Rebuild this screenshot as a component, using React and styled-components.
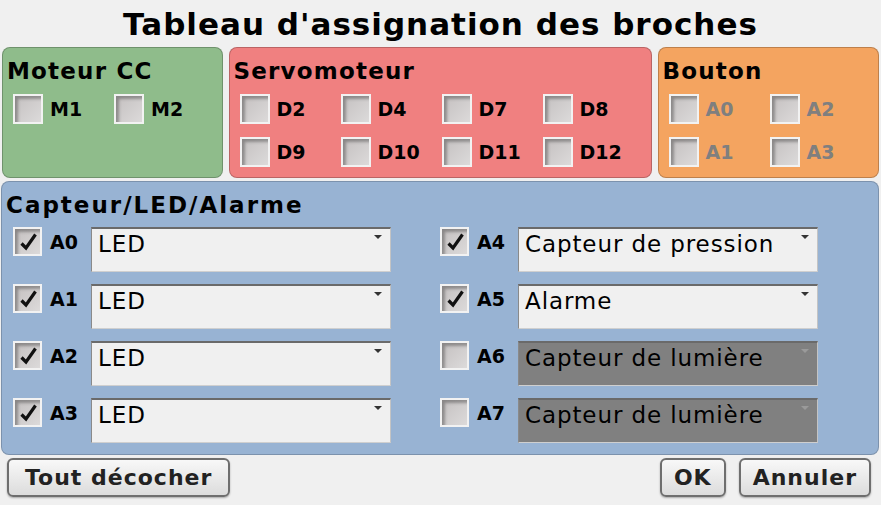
import React from 'react'
import styled, { createGlobalStyle } from 'styled-components'

const GlobalStyle = createGlobalStyle`
  html, body {
    margin : 0;
    padding : 0;
    background : #f0f0f0;
  }
  body {
    font-family : "DejaVu Sans", Verdana, sans-serif;
    color : #000;
  }
`

const Page = styled.div`
  width : 881px;
  height : 505px;
  display : flex;
  flex-direction : column;
  overflow : hidden;
`

const Title = styled.h1`
  margin : 4px 0 0 0;
  height : 40px;
  line-height : 40px;
  font-size : 31px;
  font-weight : bold;
  letter-spacing : 1px;
  text-align : center;
`

const TopRow = styled.div`
  display : flex;
  gap : 6px;
  padding : 0 2px;
  margin-top : 3px;
  height : 131px;
`

const Panel = styled.div`
  box-sizing : border-box;
  width : ${p => p.$width}px;
  background : ${p => p.$color};
  border : 1px solid rgba(0, 0, 0, 0.22);
  border-radius : 8px;
  padding : 10px 6px 0 6px;
`

const PanelTitle = styled.div`
  font-size : 23px;
  font-weight : bold;
  line-height : 26px;
  letter-spacing : ${p => p.$spacing || 1.2}px;
  margin-left : -2px;
`

const CheckGrid = styled.div`
  display : grid;
  grid-template-columns : repeat(${p => p.$cols}, 101px);
  row-gap : 13px;
  margin : 10px 0 0 4px;
`

const CheckItem = styled.div`
  display : flex;
  align-items : center;
  gap : 7px;
  font-size : 19px;
  font-weight : bold;
  color : ${p => (p.$disabled ? '#7f7f7f' : '#000')};
`

const Box = styled.div`
  box-sizing : border-box;
  width : ${p => p.$size}px;
  height : ${p => p.$size}px;
  flex : none;
  border : 2px solid #f2f2f2;
  background : linear-gradient(135deg, #c4c0c0, #dcdada);
  box-shadow : inset 3px 3px 3px rgba(0, 0, 0, 0.3);
  display : flex;
  align-items : center;
  justify-content : center;
`

const BluePanel = styled.div`
  box-sizing : border-box;
  margin : 3px 2px 0 1px;
  height : 274px;
  background : #98b3d3;
  border : 1px solid rgba(0, 0, 0, 0.18);
  border-radius : 8px;
  padding : 10px 6px 0 6px;
`

const PinGrid = styled.div`
  display : grid;
  grid-template-columns : 427px 1fr;
  grid-auto-flow : column;
  grid-template-rows : repeat(4, 45px);
  row-gap : 12px;
  margin : 9px 0 0 5px;
`

const PinRow = styled.div`
  display : flex;
  align-items : flex-start;
`

const PinCheck = styled.div`
  display : flex;
  align-items : center;
  height : 29px;
  gap : 8px;
  font-size : 19px;
  font-weight : bold;
`

const PinLabel = styled.span`
  width : 33px;
  margin-right : 8px;
`

const Select = styled.div`
  position : relative;
  box-sizing : border-box;
  width : 300px;
  height : 45px;
  background : ${p => (p.$disabled ? '#808080' : '#f0f0f0')};
  border-top : 2px solid #6a6a6a;
  border-left : 1px solid #8a8a8a;
  border-right : 1px solid #c4c4c4;
  border-bottom : 1px solid #cfcfcf;
  padding : 2px 6px 0 6px;
  font-size : 23px;
  line-height : 26px;
  letter-spacing : 0.9px;
  color : #000;
`

const Arrow = styled.span`
  position : absolute;
  right : 8px;
  top : 6px;
  width : 0;
  height : 0;
  border-left : 4px solid transparent;
  border-right : 4px solid transparent;
  border-top : 4px solid ${p => (p.$disabled ? '#9a9a9a' : '#333')};
`

const Footer = styled.div`
  display : flex;
  justify-content : space-between;
  align-items : center;
  padding : 0 10px 0 7px;
  margin-top : 3px;
`

const ButtonGroup = styled.div`
  display : flex;
  gap : 13px;
`

const Button = styled.button`
  box-sizing : border-box;
  height : 39px;
  padding : 0 ${p => p.$pad}px;
  border : 2px solid #6e6e6e;
  border-radius : 6px;
  background : linear-gradient(#f8f8f8, #dcdcdc);
  box-shadow : 0 1px 2px rgba(0, 0, 0, 0.3);
  font-family : "DejaVu Sans", Verdana, sans-serif;
  font-size : 22px;
  font-weight : bold;
  letter-spacing : 1px;
  color : #222;
`

const Check = () => (
  <svg width="22" height="22" viewBox="0 0 22 22">
    <path d="M4.5 12.5 L9 17 L18.5 3.5" fill="none" stroke="#111" strokeWidth="3.2" strokeLinejoin="miter" />
  </svg>
)

const CheckBox = ({ size = 30, checked }) => (
  <Box $size={size}>{checked && <Check />}</Box>
)

const motors = ['M1', 'M2']
const servos = ['D2', 'D4', 'D7', 'D8', 'D9', 'D10', 'D11', 'D12']
const buttons = ['A0', 'A2', 'A1', 'A3']
const pins = [
  { pin: 'A0', value: 'LED', checked: true },
  { pin: 'A1', value: 'LED', checked: true },
  { pin: 'A2', value: 'LED', checked: true },
  { pin: 'A3', value: 'LED', checked: true },
  { pin: 'A4', value: 'Capteur de pression', checked: true },
  { pin: 'A5', value: 'Alarme', checked: true },
  { pin: 'A6', value: 'Capteur de lumière', checked: false },
  { pin: 'A7', value: 'Capteur de lumière', checked: false },
]

const App = () => {
  return (
    <Page>
      <GlobalStyle />
      <Title>Tableau d'assignation des broches</Title>
      <TopRow>
        <Panel $width={221} $color="#8fbc8b">
          <PanelTitle>Moteur CC</PanelTitle>
          <CheckGrid $cols={2}>
            {motors.map(m => (
              <CheckItem key={m}><CheckBox />{m}</CheckItem>
            ))}
          </CheckGrid>
        </Panel>
        <Panel $width={424} $color="#f08080">
          <PanelTitle>Servomoteur</PanelTitle>
          <CheckGrid $cols={4}>
            {servos.map(d => (
              <CheckItem key={d}><CheckBox />{d}</CheckItem>
            ))}
          </CheckGrid>
        </Panel>
        <Panel $width={222} $color="#f4a460">
          <PanelTitle>Bouton</PanelTitle>
          <CheckGrid $cols={2}>
            {buttons.map(b => (
              <CheckItem key={b} $disabled><CheckBox />{b}</CheckItem>
            ))}
          </CheckGrid>
        </Panel>
      </TopRow>
      <BluePanel>
        <PanelTitle $spacing={2}>Capteur/LED/Alarme</PanelTitle>
        <PinGrid>
          {pins.map(p => (
            <PinRow key={p.pin}>
              <PinCheck>
                <CheckBox size={29} checked={p.checked} />
                <PinLabel>{p.pin}</PinLabel>
              </PinCheck>
              <Select $disabled={!p.checked}>
                {p.value}
                <Arrow $disabled={!p.checked} />
              </Select>
            </PinRow>
          ))}
        </PinGrid>
      </BluePanel>
      <Footer>
        <Button $pad={16}>Tout décocher</Button>
        <ButtonGroup>
          <Button $pad={12}>OK</Button>
          <Button $pad={12}>Annuler</Button>
        </ButtonGroup>
      </Footer>
    </Page>
  )
}

export default App
